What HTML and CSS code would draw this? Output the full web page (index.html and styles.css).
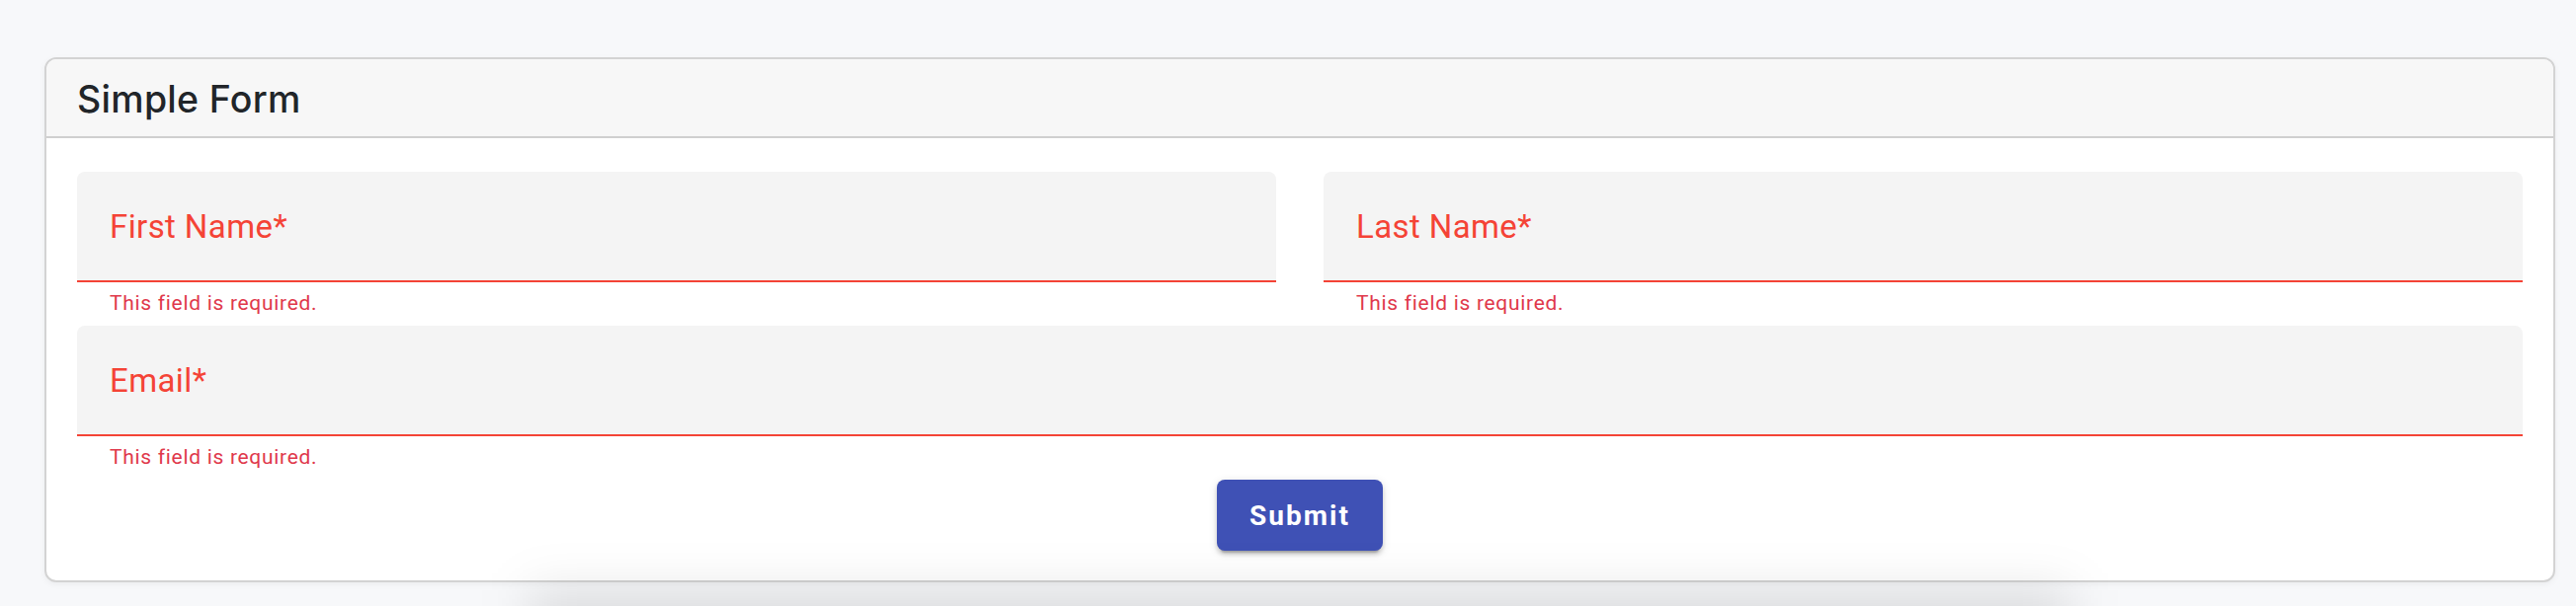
FILE: index.html
```html
<!DOCTYPE html>
<html lang="en">
<head>
<meta charset="utf-8">
<title>Simple Form</title>
<link rel="stylesheet" href="styles.css">
</head>
<body>
<main class="page">
  <section class="card">
    <header class="card-header">
      <h1 class="card-title">Simple Form</h1>
    </header>
    <form class="card-body">
      <div class="row two">
        <div class="field">
          <div class="field-box"><label class="field-label">First Name*</label></div>
          <div class="helper">This field is required.</div>
        </div>
        <div class="field">
          <div class="field-box"><label class="field-label">Last Name*</label></div>
          <div class="helper">This field is required.</div>
        </div>
      </div>
      <div class="row">
        <div class="field">
          <div class="field-box"><label class="field-label">Email*</label></div>
          <div class="helper">This field is required.</div>
        </div>
      </div>
      <div class="actions">
        <button type="button" class="btn-submit">Submit</button>
      </div>
    </form>
  </section>
</main>
</body>
</html>
```
FILE: styles.css
```css
html, body {
  margin: 0;
  padding: 0;
  height: 100%;
  overflow: hidden;
}
body {
  background: #f7f8fa;
  font-family: Roboto, "Liberation Sans", Arial, sans-serif;
}
.page {
  height: 100vh;
  box-sizing: border-box;
  overflow: hidden;
  padding: 58px 21px 0 45px;
}
.card {
  position: relative;
  background: #ffffff;
  border: 2px solid #d3d3d3;
  border-radius: 12px;
  box-shadow: 0 2px 6px rgba(0, 0, 0, 0.05);
}
.card::after {
  content: "";
  position: absolute;
  left: 50%;
  transform: translateX(-50%);
  top: calc(100% + 10px);
  width: 1560px;
  height: 120px;
  background: rgba(0, 0, 0, 0.11);
  filter: blur(25px);
  pointer-events: none;
  z-index: 2;
}
.card-header {
  background: #f7f7f7;
  border-bottom: 2px solid #cfcfcf;
  border-radius: 10px 10px 0 0;
  padding: 17px 31px 13px;
}
.card-title {
  margin: 0;
  font-family: Inter, "Liberation Sans", Arial, sans-serif;
  font-weight: 500;
  font-size: 37.5px;
  line-height: 48px;
  color: #212529;
  letter-spacing: 0.3px;
}
.card-body {
  padding: 34px 31px 30px;
  display: flex;
  flex-direction: column;
}
.row {
  display: flex;
}
.row.two {
  gap: 48px;
}
.field {
  flex: 1;
  display: flex;
  flex-direction: column;
}
.field-box {
  background: #f4f4f4;
  border-bottom: 2px solid #f44336;
  border-radius: 8px 8px 0 0;
  padding: 36px 33px 0;
  height: 74px;
}
.field-label {
  display: block;
  font-family: Roboto, sans-serif;
  font-size: 33px;
  line-height: 40px;
  letter-spacing: 0.4px;
  color: #f44336;
}
.helper {
  height: 44px;
  box-sizing: border-box;
  padding: 6px 33px 0;
  font-family: Roboto, sans-serif;
  font-size: 21px;
  line-height: 30px;
  letter-spacing: 0.7px;
  color: #e0384b;
}
.actions {
  display: flex;
  justify-content: center;
}
.btn-submit {
  width: 168px;
  height: 72px;
  border: none;
  border-radius: 8px;
  background: #3f51b5;
  color: #ffffff;
  font-family: Roboto, sans-serif;
  font-weight: 700;
  font-size: 28px;
  letter-spacing: 2px;
  padding: 0;
  display: flex;
  align-items: center;
  justify-content: center;
  box-shadow: 0 6px 2px -4px rgba(0, 0, 0, 0.2), 0 4px 4px 0 rgba(0, 0, 0, 0.14), 0 2px 10px 0 rgba(0, 0, 0, 0.12);
  cursor: pointer;
}
```
